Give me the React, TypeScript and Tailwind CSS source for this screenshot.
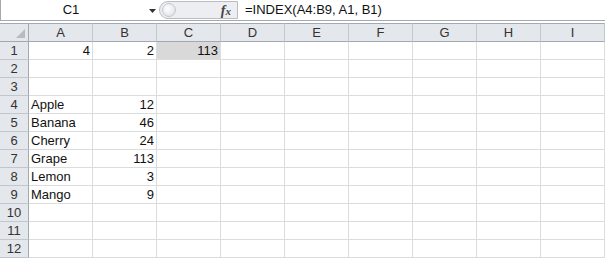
import * as React from "react";

const cols = ["A", "B", "C", "D", "E", "F", "G", "H", "I"];

type Cell = { v: string; right?: boolean; sel?: boolean };

const data: Record<number, Record<string, Cell>> = {
  1: { A: { v: "4", right: true }, B: { v: "2", right: true }, C: { v: "113", right: true, sel: true } },
  4: { A: { v: "Apple" }, B: { v: "12", right: true } },
  5: { A: { v: "Banana" }, B: { v: "46", right: true } },
  6: { A: { v: "Cherry" }, B: { v: "24", right: true } },
  7: { A: { v: "Grape" }, B: { v: "113", right: true } },
  8: { A: { v: "Lemon" }, B: { v: "3", right: true } },
  9: { A: { v: "Mango" }, B: { v: "9", right: true } },
};

const rows = Array.from({ length: 12 }, (_, i) => i + 1);

const FormulaBar: React.FC = () => (
  <div className="flex h-[21px] border-b border-l border-[#a3a9b1] bg-white">
    <div className="relative flex w-[158px] items-center">
      <span className="flex-1 pr-[18px] text-center">C1</span>
      <svg className="absolute left-[148px] top-[9px]" width="8" height="4" viewBox="0 0 8 4">
        <path d="M0 0 H7 L3.5 4 Z" fill="#333" />
      </svg>
    </div>
    <div className="my-[1px] flex w-[79px] items-center rounded-l-full border border-[#b9bdc3] bg-[#eceef1]">
      <div className="ml-[2px] h-[14px] w-[14px] rounded-full border border-[#c4c8cd] bg-[radial-gradient(circle_at_40%_40%,#ffffff,#d9dce0)]" />
      <span className="ml-auto mr-[6px] font-['Liberation_Serif',serif] text-[14px] italic font-bold text-[#444]">
        f<span className="text-[11px]">x</span>
      </span>
    </div>
    <div className="flex flex-1 items-center pl-[7px]">=INDEX(A4:B9, A1, B1)</div>
  </div>
);

export default function App() {
  return (
    <div className="h-[259px] w-[605px] overflow-hidden bg-white font-['Liberation_Sans',Arial,sans-serif] text-[13px] text-[#111]">
      <FormulaBar />
      <div className="h-[2px] bg-white" />
      <div className="grid grid-cols-[29px_repeat(9,64px)]">
        <div className="relative h-[19px] border-t border-r border-b border-[#a3a9b1] bg-[#e4e7eb]">
          <svg className="absolute right-[3px] bottom-[3px]" width="9" height="9" viewBox="0 0 9 9">
            <path d="M9 0 V9 H0 Z" fill="#b7bcc2" />
          </svg>
        </div>
        {cols.map((c) => (
          <div
            key={c}
            className="flex h-[19px] items-center justify-center border-t border-r border-b border-t-[#a3a9b1] border-r-[#c2c7cd] border-b-[#a3a9b1] bg-[#e4e7eb] text-[#333]"
          >
            {c}
          </div>
        ))}
        {rows.map((r) => (
          <React.Fragment key={r}>
            <div className="flex h-[18px] items-center justify-center border-r border-b border-r-[#a3a9b1] border-b-[#c2c7cd] bg-[#e4e7eb] text-[#333]">
              {r}
            </div>
            {cols.map((c) => {
              const cell = data[r]?.[c];
              return (
                <div
                  key={c}
                  className={`flex h-[18px] items-center border-r border-b border-[#dadcdd] px-[2px] ${
                    cell?.right ? "justify-end" : "justify-start"
                  } ${cell?.sel ? "bg-[#d9d9d9]" : "bg-white"}`}
                >
                  {cell?.v}
                </div>
              );
            })}
          </React.Fragment>
        ))}
      </div>
    </div>
  );
}
